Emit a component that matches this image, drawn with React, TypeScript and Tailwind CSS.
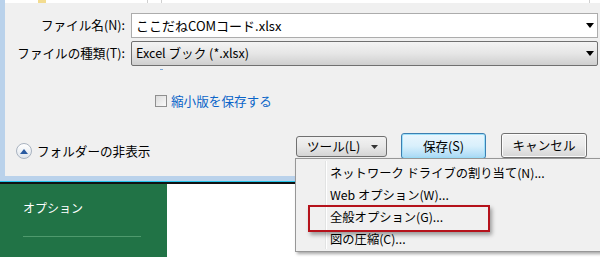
function DropArrow() {
  return (
    <svg width="8" height="5" viewBox="0 0 8 5" className="shrink-0">
      <path d="M0 0 H8 L4 5 Z" fill="#000" />
    </svg>
  );
}

function FolderToggle() {
  return (
    <div className="w-[16px] h-[16px] rounded-full border border-[#a9b3c0] bg-gradient-to-b from-[#ffffff] to-[#dfe5ec] flex items-center justify-center shrink-0">
      <svg width="8" height="5" viewBox="0 0 8 5">
        <path d="M0 5 L4 0 L8 5 Z" fill="#2a5aa0" />
      </svg>
    </div>
  );
}

export default function App() {
  return (
    <div className="relative w-[600px] h-[257px] overflow-hidden bg-white text-[12.6px] text-black font-['Noto_Sans_CJK_JP','Noto_Sans',sans-serif]">
      {/* dialog */}
      <div className="flex h-[176px]">
        <div className="w-[5px] bg-[#bad2eb]" />
        <div className="flex-1 flex flex-col bg-[#f0f0f0]">
          <div className="relative h-[3px] bg-white">
            <div className="absolute left-[33px] top-0 w-[8px] h-[3px] bg-[#f3dc90]" />
            <div className="absolute left-[142px] top-0 w-px h-[3px] bg-[#d0d0d0]" />
            <div className="absolute left-[156px] top-0 w-px h-[3px] bg-[#d0d0d0]" />
            <div className="absolute left-[584px] top-0 w-px h-[3px] bg-[#d0d0d0]" />
          </div>

          <div className="mt-[10px] flex items-center h-[25px]">
            <div className="w-[120px] text-right leading-none">ファイル名(N):</div>
            <div className="ml-[6px] w-[467px] h-[25px] border border-[#acacac] bg-white flex items-center pl-[4px] pr-[3px]">
              <span className="flex-1 leading-none text-[13px]">ここだねCOMコード.xlsx</span>
              <DropArrow />
            </div>
          </div>

          <div className="mt-[3px] flex items-center h-[25px]">
            <div className="w-[120px] text-right leading-none">ファイルの種類(T):</div>
            <div className="ml-[6px] w-[467px] h-[25px] border border-[#707070] rounded-[2px] bg-gradient-to-b from-[#f4f4f4] via-[#e6e6e6] to-[#cfcfcf] flex items-center pl-[4px] pr-[3px]">
              <span className="flex-1 leading-none">Excel ブック (*.xlsx)</span>
              <DropArrow />
            </div>
          </div>

          <div className="ml-[155px] mt-[3px] w-[3px] h-px bg-[#7aa7d8]" />

          <div className="ml-[150px] mt-[25px] flex items-center gap-[4px] h-[12px]">
            <div className="w-[12px] h-[12px] border border-[#8f8f8f] bg-gradient-to-br from-[#dcdcdc] to-[#fafafa]" />
            <span className="text-[#0a64c8] leading-none">縮小版を保存する</span>
          </div>

          <div className="mt-[26px] flex items-start pr-[13px]">
            <div className="ml-[11px] mt-[10px] flex items-center gap-[5px]">
              <FolderToggle />
              <span className="leading-none">フォルダーの非表示</span>
            </div>
            <div className="flex-1" />
            <div className="mt-[3px] w-[91px] h-[21px] rounded-[3px] border border-[#707070] bg-gradient-to-b from-[#f2f2f2] via-[#e8e8e8] to-[#d4d4d4] flex items-center pl-[10px] pr-[8px]">
              <span className="flex-1 leading-none">ツール(L)</span>
              <svg width="7" height="4" viewBox="0 0 7 4">
                <path d="M0 0 H7 L3.5 4 Z" fill="#333" />
              </svg>
            </div>
            <div className="ml-[14px] w-[85px] h-[26px] rounded-[3px] border border-[#3c7fb1] bg-gradient-to-b from-[#eaf6fd] via-[#d9f0fc] to-[#a7d9f5] shadow-[inset_0_0_0_1px_#9ee0fa] flex items-center justify-center">
              <span className="leading-none">保存(S)</span>
            </div>
            <div className="ml-[15px] w-[86px] h-[25px] rounded-[3px] border border-[#707070] bg-gradient-to-b from-[#f2f2f2] via-[#ebebeb] to-[#d5d5d5] shadow-[inset_0_0_0_1px_#fcfcfc] flex items-center justify-center">
              <span className="leading-none">キャンセル</span>
            </div>
          </div>
        </div>
      </div>

      <div className="h-[5px] bg-[#bad2eb]" />
      <div className="h-px bg-[#24c5ea]" />
      <div className="h-[2px] bg-[#111]" />

      {/* Excel backstage */}
      <div className="flex h-[73px]">
        <div className="w-[167px] bg-[#217346] pl-[23px] pt-[18px] flex flex-col">
          <span className="text-white text-[12px] leading-none">オプション</span>
          <div className="mt-[22px] w-[118px] h-px bg-[#4f9a6d]" />
        </div>
        <div className="flex-1 bg-white" />
      </div>

      {/* tools menu */}
      <div className="absolute left-[295px] top-[158px] w-[320px] h-[94px] border border-[#979797] bg-[#f0f0f0] shadow-[2px_2px_3px_rgba(0,0,0,0.35)] pt-[3px] text-[12.3px]">
        <div className="absolute left-[29px] top-[2px] bottom-[2px] w-px bg-[#e2e3e3]" />
        <div className="absolute left-[30px] top-[2px] bottom-[2px] w-px bg-white" />
        <div className="flex flex-col pl-[34px]">
          <div className="h-[22px] flex items-center leading-none">ネットワーク ドライブの割り当て(N)...</div>
          <div className="h-[22px] flex items-center leading-none">Web オプション(W)...</div>
          <div className="h-[22px] flex items-center leading-none">全般オプション(G)...</div>
          <div className="h-[22px] flex items-center leading-none">図の圧縮(C)...</div>
        </div>
      </div>

      {/* highlight */}
      <div className="absolute left-[308px] top-[205px] w-[182px] h-[27px] border-2 border-[#b5121b] shadow-[2px_3px_4px_rgba(0,0,0,0.35)]" />
    </div>
  );
}
